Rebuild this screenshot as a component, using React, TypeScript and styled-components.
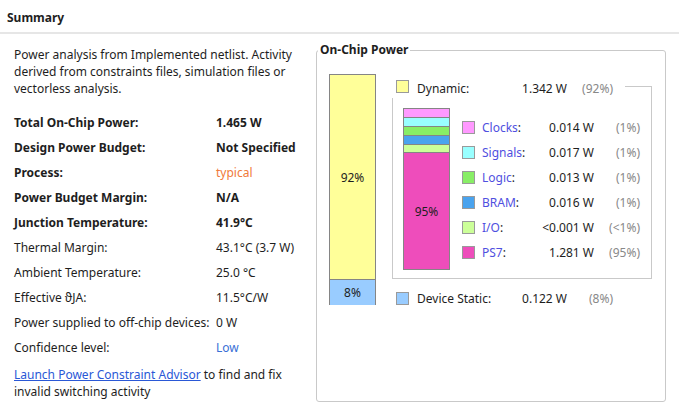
import React from "react";
import styled, { createGlobalStyle } from "styled-components";

const Global = createGlobalStyle`
  html, body { margin: 0; padding: 0; background: #fff; }
  body { font-family: "Noto Sans", "Open Sans", sans-serif; font-size: 12px; color: #1e1e1e; }
`;

const Page = styled.div`
  width: 679px;
  height: 410px;
  background: #fff;
  overflow: hidden;
`;

const Header = styled.div`
  display: flex;
  align-items: center;
  padding: 2px 0 0 7px;
  font-weight: 700;
  border-bottom: 2px solid #e6e6e6;
  box-sizing: border-box;
  height: 34px;
`;

const Body = styled.div`
  display: flex;
  align-items: flex-start;
`;

const Left = styled.div`
  width: 288px;
  padding: 12px 0 0 14px;
  margin-right: 14px;
`;

const Para = styled.p`
  margin: 0;
  line-height: 17px;
`;

const Rows = styled.div`
  margin: 13px 0 6px;
`;

const Row = styled.div`
  display: flex;
  height: 25px;
  align-items: center;
`;

const Label = styled.div<{ $bold?: boolean }>`
  width: 202px;
  font-weight: ${(p) => (p.$bold ? 700 : 400)};
`;

const Value = styled.div<{ $bold?: boolean; $color?: string }>`
  font-weight: ${(p) => (p.$bold ? 700 : 400)};
  color: ${(p) => p.$color || "inherit"};
`;

const Link = styled.a`
  color: #2a58d6;
  text-decoration: underline;
  cursor: pointer;
`;

const Group = styled.fieldset`
  margin: 8px 0 0 0;
  width: 350px;
  height: 360px;
  box-sizing: border-box;
  border: 1px solid #c9c9c9;
  border-radius: 3px;
  padding: 16px 0 0 12px;
  display: flex;
  align-items: flex-start;
`;

const Legend = styled.legend`
  font-weight: 700;
  padding: 0 2px;
  margin-left: -11px;
  line-height: 16px;
  margin-top: 2px;
`;

const Inner = styled.div`
  display: flex;
  align-items: flex-start;
`;

const BigBar = styled.div`
  width: 47px;
  height: 231px;
  display: flex;
  flex-direction: column;
  box-sizing: border-box;
  border: 1px solid #858585;
`;

const Seg = styled.div<{ $bg: string; $h: number }>`
  height: ${(p) => p.$h}px;
  background: ${(p) => p.$bg};
  display: flex;
  align-items: center;
  justify-content: center;
  & + & { border-top: 1px solid #858585; }
  flex-shrink: 0;
`;

const RightCol = styled.div`
  margin-left: 16px;
  margin-top: 6px;
  width: 260px;
`;

const LegendRow = styled.div`
  display: flex;
  align-items: center;
  height: 13px;
`;

const Swatch = styled.div<{ $bg: string }>`
  width: 13px;
  height: 13px;
  box-sizing: border-box;
  border: 1px solid #9a9a9a;
  background: ${(p) => p.$bg};
  flex-shrink: 0;
`;

const TopLabel = styled.div`
  width: 80px;
  margin-left: 8px;
`;

const TopValue = styled.div`
  width: 70px;
  text-align: right;
`;

const Pct = styled.div<{ $w: number }>`
  width: ${(p) => p.$w}px;
  text-align: right;
  color: #888;
`;

const HeadWrap = styled.div`
  display: flex;
  align-items: flex-start;
  height: 18px;
  padding-left: 4px;
`;

const Rule = styled.div`
  flex: 1;
  align-self: stretch;
  margin: 6px 0 0 12px;
  border-top: 1px solid #c9c9c9;
  border-right: 1px solid #c9c9c9;
`;

const DynBox = styled.div`
  display: flex;
  align-items: flex-start;
  border: 1px solid #c9c9c9;
  border-top: none;
  height: 181px;
  box-sizing: border-box;
  padding: 10px 0 0 10px;
`;

const SmallBar = styled.div`
  width: 47px;
  height: 162px;
  display: flex;
  flex-direction: column;
  box-sizing: border-box;
  border: 1px solid #858585;
`;

const List = styled.div`
  margin: 7px 0 0 12px;
`;

const ItemRow = styled.div`
  display: flex;
  align-items: center;
  height: 25px;
`;

const ItemLabel = styled.div`
  width: 57px;
  margin-left: 7px;
  span { color: #4f4fe0; }
`;

const ItemValue = styled.div`
  width: 55px;
  text-align: right;
`;

const StaticRow = styled(LegendRow)`
  margin-top: 13px;
  padding-left: 4px;
`;

const items = [
  { name: "Clocks", color: "#ff99ff", value: "0.014 W", pct: "(1%)" },
  { name: "Signals", color: "#99ffff", value: "0.017 W", pct: "(1%)" },
  { name: "Logic", color: "#88ee66", value: "0.013 W", pct: "(1%)" },
  { name: "BRAM", color: "#4aa3ee", value: "0.016 W", pct: "(1%)" },
  { name: "I/O", color: "#ccff99", value: "<0.001 W", pct: "(<1%)" },
  { name: "PS7", color: "#ee4dbb", value: "1.281 W", pct: "(95%)" },
];

const rows: { l: string; v: string; bold?: boolean; color?: string }[] = [
  { l: "Total On-Chip Power:", v: "1.465 W", bold: true },
  { l: "Design Power Budget:", v: "Not Specified", bold: true },
  { l: "Process:", v: "typical", bold: true, color: "#f07a3a" },
  { l: "Power Budget Margin:", v: "N/A", bold: true },
  { l: "Junction Temperature:", v: "41.9°C", bold: true },
  { l: "Thermal Margin:", v: "43.1°C (3.7 W)" },
  { l: "Ambient Temperature:", v: "25.0 °C" },
  { l: "Effective ϑJA:", v: "11.5°C/W" },
  { l: "Power supplied to off-chip devices:", v: "0 W" },
  { l: "Confidence level:", v: "Low", color: "#3a6fd6" },
];

export default function App() {
  return (
    <Page>
      <Global />
      <Header>Summary</Header>
      <Body>
        <Left>
          <Para>
            Power analysis from Implemented netlist. Activity derived from constraints files, simulation files or
            vectorless analysis.
          </Para>
          <Rows>
            {rows.map((r) => (
              <Row key={r.l}>
                <Label $bold={r.bold}>{r.l}</Label>
                <Value $bold={r.bold && !r.color} $color={r.color}>
                  {r.v}
                </Value>
              </Row>
            ))}
          </Rows>
          <Para>
            <Link>Launch Power Constraint Advisor</Link> to find and fix invalid switching activity
          </Para>
        </Left>
        <Group>
          <Legend>On-Chip Power</Legend>
          <Inner>
            <BigBar>
              <Seg $bg="#ffff99" $h={204}>92%</Seg>
              <Seg $bg="#99ccff" $h={25}>8%</Seg>
            </BigBar>
            <RightCol>
              <HeadWrap>
                <Swatch $bg="#ffff99" />
                <TopLabel>Dynamic:</TopLabel>
                <TopValue>1.342 W</TopValue>
                <Pct $w={46}>(92%)</Pct>
                <Rule />
              </HeadWrap>
              <DynBox>
                <SmallBar>
                  <Seg $bg="#ff99ff" $h={8} />
                  <Seg $bg="#99ffff" $h={8} />
                  <Seg $bg="#88ee66" $h={8} />
                  <Seg $bg="#4aa3ee" $h={8} />
                  <Seg $bg="#ccff99" $h={7} />
                  <Seg $bg="#ee4dbb" $h={116}>95%</Seg>
                </SmallBar>
                <List>
                  {items.map((it) => (
                    <ItemRow key={it.name}>
                      <Swatch $bg={it.color} />
                      <ItemLabel>
                        <span>{it.name}</span>:
                      </ItemLabel>
                      <ItemValue>{it.value}</ItemValue>
                      <Pct $w={46}>{it.pct}</Pct>
                    </ItemRow>
                  ))}
                </List>
              </DynBox>
              <StaticRow>
                <Swatch $bg="#99ccff" />
                <TopLabel>Device Static:</TopLabel>
                <TopValue>0.122 W</TopValue>
                <Pct $w={46}>(8%)</Pct>
              </StaticRow>
            </RightCol>
          </Inner>
        </Group>
      </Body>
    </Page>
  );
}
